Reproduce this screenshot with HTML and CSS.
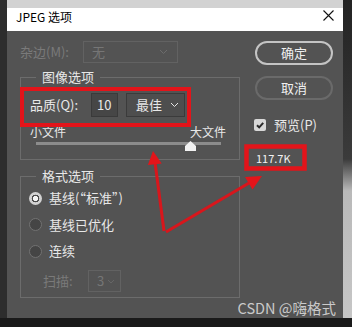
FILE: index.html
```html
<!DOCTYPE html>
<html>
<head>
    <title>JPEG 选项</title>
    <link rel="stylesheet" href="styles.css">
</head>
<body>
    <div class="screen">
        <div class="edge-left"></div>

        <div class="dialog">
            <div class="titlebar">
                <span class="title">JPEG 选项</span>
                <svg class="close" width="11" height="11" viewBox="0 0 11 11">
                    <path d="M0.5 0.5 L10.5 10.5 M10.5 0.5 L0.5 10.5" stroke="#111" stroke-width="1.1" fill="none"/>
                </svg>
            </div>

            <div class="panel">
                <div class="col-left">
                    <!-- 杂边 -->
                    <div class="row matte">
                        <span class="label disabled">杂边(M):</span>
                        <div class="select select-off wide">
                            <span>无</span>
                            <svg class="chev" width="9" height="6" viewBox="0 0 9 6"><path d="M1 1 L4.5 4.5 L8 1" stroke="#6c6c6c" fill="none"/></svg>
                        </div>
                    </div>

                    <!-- 图像选项 -->
                    <fieldset class="group image-group">
                        <legend>图像选项</legend>
                        <div class="row quality">
                            <span class="label q-label">品质(Q):</span>
                            <div class="num-box">10</div>
                            <div class="select q-select">
                                <span>最佳</span>
                                <svg class="chev" width="9" height="6" viewBox="0 0 9 6"><path d="M1 1 L4.5 4.5 L8 1" stroke="#e6e6e6" fill="none"/></svg>
                            </div>
                        </div>
                        <div class="size-labels">
                            <span>小文件</span>
                            <span class="big">大文件</span>
                        </div>
                        <div class="slider">
                            <div class="track"></div>
                            <svg class="thumb" width="11" height="10" viewBox="0 0 11 10"><path d="M5.5 0 L11 5 L11 10 L0 10 L0 5 Z" fill="#f2f2f2"/></svg>
                        </div>
                    </fieldset>

                    <!-- 格式选项 -->
                    <fieldset class="group format-group">
                        <legend>格式选项</legend>
                        <div class="radio-row"><span class="radio on"></span>基线(“标准”)</div>
                        <div class="radio-row"><span class="radio"></span>基线已优化</div>
                        <div class="radio-row"><span class="radio"></span>连续</div>
                        <div class="row scan">
                            <span class="label disabled scan-label">扫描:</span>
                            <div class="select select-off small">
                                <span>3</span>
                                <svg class="chev" width="8" height="5" viewBox="0 0 8 5"><path d="M1 1 L4 4 L7 1" stroke="#666" fill="none"/></svg>
                            </div>
                        </div>
                    </fieldset>
                </div>

                <div class="col-right">
                    <div class="btn btn-default">确定</div>
                    <div class="btn">取消</div>
                    <div class="check-row">
                        <span class="checkbox">
                            <svg width="12" height="12" viewBox="0 0 12 12"><path d="M3 6.2 L5.2 8.4 L9.2 3.8" stroke="#2a2a2a" stroke-width="2" fill="none"/></svg>
                        </span>
                        预览(P)
                    </div>
                    <div class="filesize">117.7K</div>
                </div>

                <div class="watermark">CSDN @嗨格式</div>
            </div>
        </div>

        <div class="edge-right"></div>

        <!-- 红色标注 -->
        <svg class="marks" width="352" height="327" viewBox="0 0 352 327">
            <rect x="22" y="89" width="167" height="36" fill="none" stroke="#e3141a" stroke-width="4"/>
            <rect x="246.5" y="146.5" width="58" height="22" fill="none" stroke="#e3141a" stroke-width="4.5"/>
            <line x1="164" y1="231" x2="155" y2="162" stroke="#d8161c" stroke-width="3"/>
            <polygon points="153,151 161.7,163.5 147.9,165" fill="#e3141a"/>
            <line x1="166" y1="232" x2="249" y2="183" stroke="#d8161c" stroke-width="3"/>
            <polygon points="262,176 252.5,189.5 245,177" fill="#e3141a"/>
        </svg>
    </div>
</body>
</html>
```

FILE: styles.css
```css
body {
    margin: 0;
    background: #1b1b1b;
    font-family: "Noto Sans CJK SC", "Noto Sans", sans-serif;
}

.screen {
    position: relative;
    width: 352px;
    height: 327px;
    display: grid;
    grid-template-columns: 7px 336px 9px;
    grid-template-rows: 318px 9px;
    background: #1a1a1a;
    overflow: hidden;
}

.edge-left {
    background: #2d2d2d;
}

.edge-right {
    background: linear-gradient(#232323 0, #3b3b3b 50%, #b9b9b9 60%, #c6c6c6 100%);
}

.dialog {
    display: flex;
    flex-direction: column;
}

.titlebar {
    height: 31px;
    flex: none;
    display: flex;
    align-items: center;
    justify-content: space-between;
    padding: 0 9px;
    background: linear-gradient(#d2d2d2 0, #d2d2d2 8px, #ffffff 8px);
}

.title {
    font-size: 12px;
    color: #000;
    padding-top: 1px;
}

.close {
    display: block;
}

.panel {
    flex: 1;
    position: relative;
    display: flex;
    padding: 10px 0 0 13px;
    background: #535353;
    color: #e8e8e8;
    font-size: 13px;
    line-height: 16px;
}

.col-left {
    width: 220px;
}

.row {
    display: flex;
    align-items: center;
}

.label.disabled {
    color: #7a7a7a;
}

.matte {
    height: 22px;
}

.matte .label {
    width: 63px;
}

.select {
    display: flex;
    align-items: center;
    justify-content: space-between;
    box-sizing: border-box;
}

.select-off {
    height: 22px;
    border: 1px solid #626262;
    color: #767676;
}

.select.wide {
    width: 95px;
    padding: 0 9px 0 8px;
}

.select.small {
    width: 33px;
    padding: 0 5px 0 8px;
}

.chev {
    display: block;
}

/* 分组框 */
.group {
    margin: 5px 0 0;
    padding: 7px 9px 0;
    border: 1px solid #6c6c6c;
    min-width: 0;
}

.group legend {
    margin-left: 6px;
    padding: 0 6px;
    line-height: 18px;
}

.quality {
    height: 24px;
}

.q-label {
    width: 61px;
}

.num-box {
    width: 27px;
    height: 24px;
    box-sizing: border-box;
    padding-left: 5px;
    background: #464646;
    border: 1px solid #3a3a3a;
    line-height: 22px;
}

.q-select {
    width: 59px;
    height: 24px;
    margin-left: 8px;
    padding: 0 5px 0 9px;
    background: #4e4e4e;
    border: 1px solid #3b3b3b;
}

.size-labels {
    display: flex;
    margin-top: 7px;
    padding-right: 4px;
    font-size: 12px;
}

.size-labels .big {
    margin-left: auto;
}

.slider {
    position: relative;
    margin: 2px 0 0 6px;
    width: 185px;
    padding-bottom: 14px;
}

.track {
    height: 3px;
    background: #8c8c8c;
}

.thumb {
    position: absolute;
    left: 149px;
    top: -1px;
}

.format-group {
    margin-top: 7px;
    padding-top: 0;
    padding-bottom: 5px;
}

.radio-row {
    display: flex;
    align-items: center;
    gap: 7px;
    height: 26.5px;
}

.radio {
    width: 13px;
    height: 13px;
    margin-left: -1px;
    box-sizing: border-box;
    border-radius: 50%;
    background: #454545;
    border: 1px solid #727272;
}

.radio.on {
    background: radial-gradient(circle, #f4f4f4 0, #f4f4f4 2.4px, #4a4a4a 2.9px, #4a4a4a 3.6px, #d2d2d2 4.1px);
    border: none;
}

.scan {
    margin-top: 5.5px;
    padding-left: 13px;
    height: 22px;
}

.scan-label {
    width: 45px;
}

/* 右侧按钮 */
.col-right {
    width: 78px;
    margin-left: 15px;
}

.btn {
    height: 24px;
    box-sizing: border-box;
    border: 2px solid #6a6a6a;
    border-radius: 12px;
    text-align: center;
    line-height: 20px;
    color: #f0f0f0;
    margin-top: 11px;
}

.btn-default {
    margin-top: 0;
    border-color: #c4c4c4;
}

.check-row {
    display: flex;
    align-items: center;
    gap: 8px;
    margin: 17px 0 0 -1px;
}

.checkbox {
    width: 12px;
    height: 12px;
    border-radius: 2px;
    background: #d8d8d8;
}

.checkbox svg {
    display: block;
}

.filesize {
    margin: 17px 0 0 1px;
    font-size: 11px;
    color: #f2f2f2;
}

.watermark {
    position: absolute;
    right: 7px;
    bottom: 1px;
    font-size: 14.5px;
    line-height: 18px;
    color: rgba(225, 225, 225, 0.85);
}

.marks {
    position: absolute;
    left: 0;
    top: 0;
    pointer-events: none;
}
```
